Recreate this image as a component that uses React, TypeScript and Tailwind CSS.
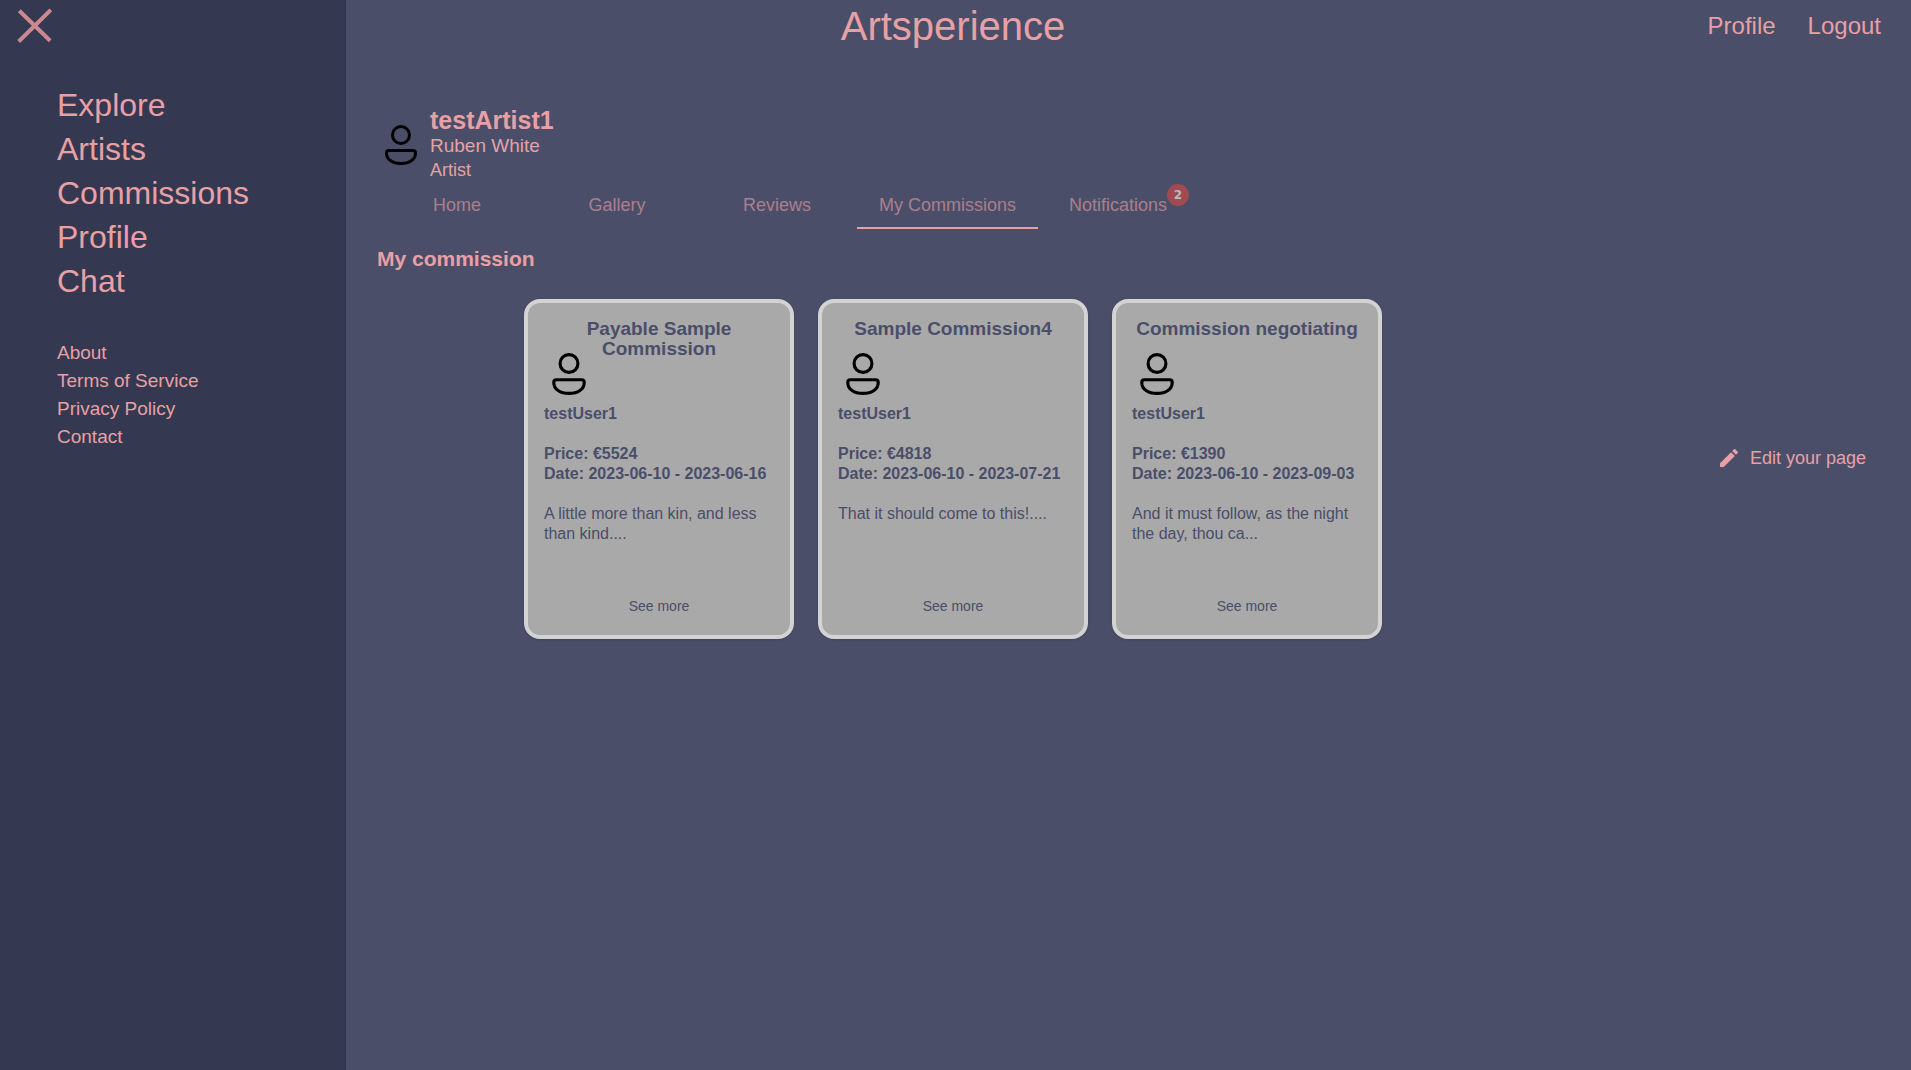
import React from "react";
import { MdEdit } from "react-icons/md";

type Commission = {
  title: string;
  user: string;
  price: string;
  dates: string;
  text: string;
};

const commissions: Commission[] = [
  {
    title: "Payable Sample Commission",
    user: "testUser1",
    price: "€5524",
    dates: "2023-06-10 - 2023-06-16",
    text: "A little more than kin, and less than kind....",
  },
  {
    title: "Sample Commission4",
    user: "testUser1",
    price: "€4818",
    dates: "2023-06-10 - 2023-07-21",
    text: "That it should come to this!....",
  },
  {
    title: "Commission negotiating",
    user: "testUser1",
    price: "€1390",
    dates: "2023-06-10 - 2023-09-03",
    text: "And it must follow, as the night the day, thou ca...",
  },
];

const mainLinks = ["Explore", "Artists", "Commissions", "Profile", "Chat"];
const infoLinks = ["About", "Terms of Service", "Privacy Policy", "Contact"];
const tabs = ["Home", "Gallery", "Reviews", "My Commissions", "Notifications"];

function UserIcon({ className }: { className: string }) {
  return (
    <svg viewBox="0 0 32 40" fill="none" stroke="#000" strokeWidth="3" className={className} aria-hidden="true">
      <circle cx="16" cy="10" r="8.5" />
      <path d="M4 25.5H28C29.7 25.5 30.5 26.4 30.5 28C30.5 34.6 24.4 38.5 16 38.5C7.6 38.5 1.5 34.6 1.5 28C1.5 26.4 2.3 25.5 4 25.5Z" />
    </svg>
  );
}

function CommissionCard({ item }: { item: Commission }) {
  return (
    <article className="flex min-h-[340px] w-[270px] flex-col rounded-2xl border-4 border-[#d3d3d3] bg-[#a9a9a9] p-4 text-base leading-5 shadow-sm">
      <h3 className="h-[34px] text-center text-[19px] leading-5 font-bold">{item.title}</h3>
      <UserIcon className="ml-2 h-[42px] w-[34px]" />
      <p className="mt-[9px] font-bold">{item.user}</p>
      <p className="mt-5 font-bold">Price: {item.price}</p>
      <p className="font-bold">Date: {item.dates}</p>
      <p className="mt-5">{item.text}</p>
      <button type="button" className="mt-auto self-center text-sm leading-[26px]">
        See more
      </button>
    </article>
  );
}

export default function App() {
  return (
    <div className="grid min-h-screen grid-cols-[346px_1fr] grid-rows-[52px_1fr] bg-[#4a4e69] font-['Liberation_Sans',Arial,sans-serif] text-[#e8a0a5]">
      <aside className="col-start-1 row-span-2 row-start-1 border-r border-[#2e3148] bg-[#353851] pt-[83px] pl-[57px]">
        <nav aria-label="Main" className="flex flex-col items-start text-[32px] leading-[44px]">
          {mainLinks.map((label) => (
            <a key={label} href="#">
              {label}
            </a>
          ))}
        </nav>
        <nav aria-label="Information" className="mt-9 flex flex-col items-start text-[19px] leading-7">
          {infoLinks.map((label) => (
            <a key={label} href="#">
              {label}
            </a>
          ))}
        </nav>
      </aside>

      <header className="col-span-2 col-start-1 row-start-1 grid grid-cols-[1fr_auto_1fr] items-center pr-[5px]">
        <button type="button" aria-label="Close menu" className="ml-4 h-9 w-9 justify-self-start text-[#e5989b] opacity-85">
          <svg viewBox="0 0 36 36" stroke="currentColor" strokeWidth="4" className="h-9 w-9" aria-hidden="true">
            <path d="M3.3 2.7L34.2 32.8M2.7 33.5L34.8 1.8" />
          </svg>
        </button>
        <h1 className="text-[40px] leading-[52px]">Artsperience</h1>
        <nav aria-label="Account" className="flex gap-8 justify-self-end pr-[25px] text-2xl">
          <a href="#">Profile</a>
          <a href="#">Logout</a>
        </nav>
      </header>

      <main className="col-start-2 row-start-2 pt-[55px] pl-[31px]">
        <div className="flex items-center gap-[13px] pl-2">
          <UserIcon className="h-10 w-8" />
          <div>
            <h2 className="text-[25px] leading-[27px] font-bold">testArtist1</h2>
            <p className="text-[19px] leading-6">Ruben White</p>
            <p className="text-lg leading-6">Artist</p>
          </div>
        </div>

        <div role="tablist" className="flex">
          {tabs.map((label) => {
            const active = label === "My Commissions";
            return (
              <button
                key={label}
                type="button"
                role="tab"
                aria-selected={active}
                className={
                  "flex h-[47px] min-w-40 items-center justify-center border-b-2 px-[22px] text-lg " +
                  (active ? "border-[#e8a0a5]" : "border-transparent")
                }
              >
                <span className="relative opacity-60">
                  {label}
                  {label === "Notifications" && (
                    <span className="absolute -top-[7px] left-full flex h-[22px] w-[22px] items-center justify-center rounded-full bg-[#d94a42] font-['DejaVu_Sans',sans-serif] text-xs font-bold text-white">
                      2
                    </span>
                  )}
                </span>
              </button>
            );
          })}
        </div>

        <h2 className="mt-4 mb-1 text-[21px] leading-7 font-bold">My commission</h2>

        <div className="flex items-center">
          <section aria-label="My commission" className="flex flex-1 justify-center gap-6 pt-[22px] text-[#4a4e69]">
            {commissions.map((item) => (
              <CommissionCard key={item.title} item={item} />
            ))}
          </section>
          <div className="flex w-[382px] justify-end pr-[45px]">
            <a href="#" className="flex items-center gap-[9px] text-lg">
              <MdEdit className="h-6 w-6" aria-hidden="true" />
              Edit your page
            </a>
          </div>
        </div>
      </main>
    </div>
  );
}
